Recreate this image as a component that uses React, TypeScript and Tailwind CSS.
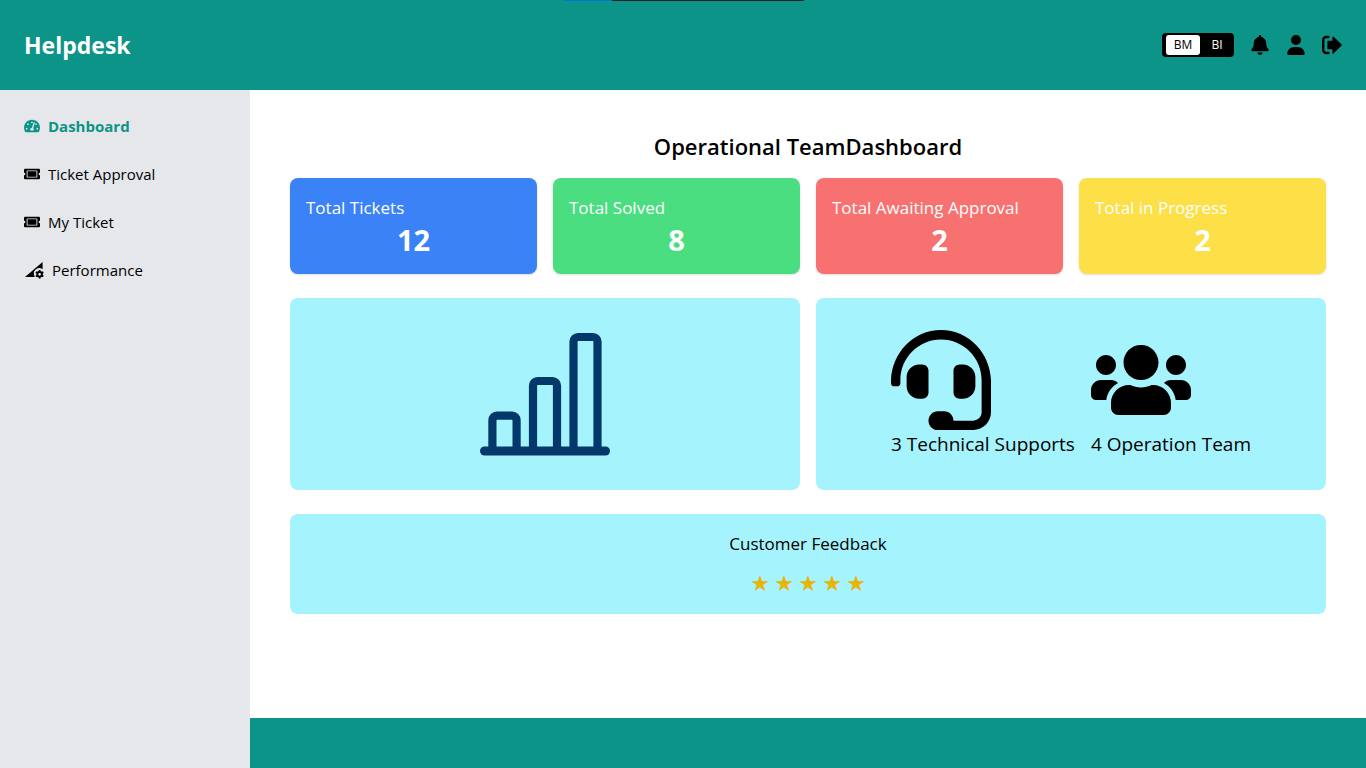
import type { ReactNode } from "react";
import { FaHeadset, FaTachometerAlt, FaTicketAlt, FaUsers } from "react-icons/fa";
import { FaBell, FaUser } from "react-icons/fa6";

const stats = [
  { label: "Total Tickets", value: 12, color: "bg-[#3b82f6]" },
  { label: "Total Solved", value: 8, color: "bg-[#4ade80]" },
  { label: "Total Awaiting Approval", value: 2, color: "bg-[#f87171]" },
  { label: "Total in Progress", value: 2, color: "bg-[#fde047]" },
];

function BarsIcon() {
  return (
    <svg width="130" height="128" viewBox="0 0 130 128" fill="none" stroke="#04386b" strokeLinecap="round" aria-hidden="true">
      <path strokeWidth="9" d="M4.5 121H125.5" />
      <path
        strokeWidth="8.2"
        d="M12.4 121V90.200a4.500 4.500 0 0 1 4.500-4.500h15.200a4.500 4.500 0 0 1 4.500 4.500V121M53 121V55.500a4.500 4.500 0 0 1 4.500-4.500h15a4.500 4.500 0 0 1 4.500 4.500V121M93.500 121V11.500a4.500 4.500 0 0 1 4.500-4.500h15a4.500 4.500 0 0 1 4.500 4.500V121"
      />
    </svg>
  );
}

function LogoutIcon() {
  return (
    <svg width="20" height="20" viewBox="0 0 20 20" aria-hidden="true">
      <path fill="none" stroke="currentColor" strokeWidth="2.4" strokeLinecap="round" d="M6.500 2H4.200a3 3 0 0 0-3 3v10a3 3 0 0 0 3 3H6.500" />
      <path
        fill="currentColor"
        stroke="currentColor"
        strokeWidth="1.200"
        strokeLinejoin="round"
        d="M6 6.400h5V2L19.200 10 11 18v-4.400H6z"
      />
    </svg>
  );
}

function PerformanceIcon() {
  return (
    <svg width="20" height="20" viewBox="0 0 20 20" aria-hidden="true">
      <path fill="currentColor" d="M1 17 18.600 2v7.200a5.400 5.400 0 0 0-8.300 6.300c.1.500.2 1 .500 1.500z" />
      <circle cx="15.600" cy="14.300" r="2.300" fill="none" stroke="currentColor" strokeWidth="1.900" />
      <path
        stroke="currentColor"
        strokeWidth="1.900"
        d="M15.600 10v2M15.600 16.600v2M11.900 12.150l1.700 1M17.600 15.450l1.700 1M11.900 16.450l1.700-1M17.600 13.150l1.700-1"
      />
    </svg>
  );
}

function NavItem({ icon, label, active = false }: { icon: ReactNode; label: string; active?: boolean }) {
  return (
    <li>
      <a
        href="#"
        aria-current={active ? "page" : undefined}
        className={active ? "flex items-center gap-2 font-bold text-[#0d9488]" : "flex items-center gap-2"}
      >
        {icon}
        {label}
      </a>
    </li>
  );
}

export default function App() {
  return (
    <div className="relative flex min-h-screen flex-col bg-white font-['Open_Sans','Noto_Sans',sans-serif] text-[15px] leading-6 text-black">
      <div className="absolute top-0 left-1/2 flex h-px w-60 -translate-x-[119px] bg-[#202020]">
        <div className="w-12 bg-[#0078d7]" />
      </div>

      <header className="flex h-[90px] items-center justify-between bg-[#0d9488] px-6">
        <h1 className="text-[23px] leading-8 font-bold text-white">Helpdesk</h1>
        <div className="flex items-center gap-4">
          <div className="flex h-6 w-[72px] items-center rounded bg-black pl-1 text-[12px] leading-4 text-white">
            <button type="button" className="h-5 flex-1 rounded-[3px] bg-white text-black">BM</button>
            <button type="button" className="h-5 flex-1">BI</button>
          </div>
          <button type="button" aria-label="Notifications"><FaBell size={20} /></button>
          <button type="button" aria-label="Profile"><FaUser size={20} /></button>
          <button type="button" aria-label="Log out"><LogoutIcon /></button>
        </div>
      </header>

      <div className="flex flex-1">
        <nav className="w-[250px] shrink-0 bg-[#e5e7eb] p-6">
          <ul className="flex flex-col gap-6">
            <NavItem active icon={<FaTachometerAlt size={16} />} label="Dashboard" />
            <NavItem icon={<FaTicketAlt size={16} />} label="Ticket Approval" />
            <NavItem icon={<FaTicketAlt size={16} />} label="My Ticket" />
            <NavItem icon={<PerformanceIcon />} label="Performance" />
          </ul>
        </nav>

        <div className="flex min-w-0 flex-1 flex-col">
          <main className="flex-1 p-10">
            <h2 className="mb-4 text-center text-[22px] leading-8 font-semibold">Operational TeamDashboard</h2>

            <section className="grid grid-cols-4 gap-4">
              {stats.map((s) => (
                <div key={s.label} className={`rounded-lg p-4 text-white shadow-sm ${s.color}`}>
                  <h3 className="text-[17px] leading-7">{s.label}</h3>
                  <p className="text-center text-[29px] leading-9 font-bold">{s.value}</p>
                </div>
              ))}
            </section>

            <section className="mt-6 grid grid-cols-2 gap-4">
              <div className="flex items-center justify-center rounded-lg bg-[#a5f3fc] p-8">
                <BarsIcon />
              </div>
              <div className="flex items-center justify-center gap-4 rounded-lg bg-[#a5f3fc] py-8 text-[19px] leading-7">
                <div>
                  <FaHeadset size={100} />
                  <p>3 Technical Supports</p>
                </div>
                <div>
                  <FaUsers size={100} />
                  <p>4 Operation Team</p>
                </div>
              </div>
            </section>

            <section className="mt-6 rounded-lg bg-[#a5f3fc] p-4 text-center">
              <h3 className="text-[17px] leading-7">Customer Feedback</h3>
              <div className="mt-3 flex justify-center font-['DejaVu_Sans',sans-serif] text-[22px] leading-7 text-[#eab308]">
                {[1, 2, 3, 4, 5].map((n) => (
                  <span key={n} className="w-6">★</span>
                ))}
              </div>
            </section>
          </main>
          <footer className="h-[50px] bg-[#0d9488]" />
        </div>
      </div>
    </div>
  );
}
